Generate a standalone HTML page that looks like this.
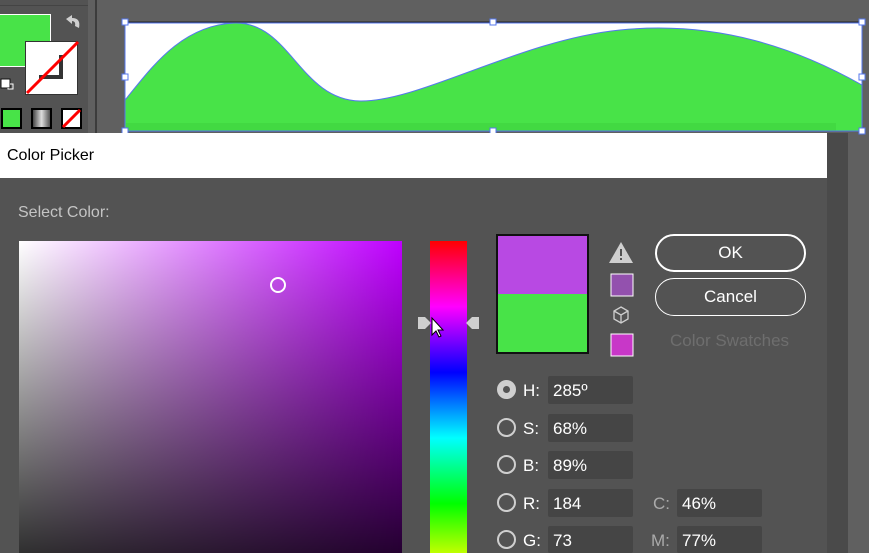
<!DOCTYPE html>
<html><head><style>
*{margin:0;padding:0;box-sizing:border-box}
html,body{width:869px;height:553px;overflow:hidden}
body{background:#606060;position:relative;font-family:"Liberation Sans",sans-serif}
.a{position:absolute}
.lbl{color:#fff;font-size:17px}
.fld{background:#454545;border-radius:2px;height:28px;width:85px;color:#fff;font-size:17px;padding:5px 0 0 5px;overflow:hidden}
.radio{width:19px;height:19px;border:2px solid #cfcfcf;border-radius:50%}
</style></head><body>
<div class="a" style="left:0;top:0;width:88px;height:135px;background:#535353"></div>
<div class="a" style="left:0;top:5px;width:88px;height:1px;background:#444"></div>
<div class="a" style="left:95px;top:0;width:2px;height:135px;background:#3c3c3c"></div>
<div class="a" style="left:0;top:14px;width:51px;height:53px;background:#48e348;border:1px solid #fff;border-left:none"></div>
<div class="a" style="left:25px;top:41px;width:53px;height:54px;background:#fff;border:1px solid #333"></div>
<div class="a" style="left:39px;top:55px;width:24px;height:24px;border:4px solid #333;border-top:none;border-left:none"></div>
<svg class="a" style="left:0;top:0" width="100" height="135">
<line x1="27" y1="93" x2="78" y2="42" stroke="#f00" stroke-width="3"/>
<path d="M66 19 l6 -4 v3 q9 0 7 10 l-4 -2 q1 -5 -3 -5 v3z" fill="#cfcfcf"/>
<rect x="1" y="79" width="9" height="9" fill="#fff" stroke="#111"/>
<path d="M10 84 h3 v5 h-5 v-1" fill="none" stroke="#fff" stroke-width="1"/>
<rect x="2" y="109" width="19" height="19" fill="#48e348" stroke="#000" stroke-width="2"/>
<defs><linearGradient id="g1"><stop offset="0" stop-color="#333"/><stop offset=".5" stop-color="#ddd"/><stop offset="1" stop-color="#444"/></linearGradient></defs>
<rect x="32" y="109" width="19" height="19" fill="url(#g1)" stroke="#000" stroke-width="2"/>
<rect x="62" y="109" width="19" height="19" fill="#fff" stroke="#000" stroke-width="2"/>
<line x1="63" y1="127" x2="80" y2="110" stroke="#f00" stroke-width="3"/>
</svg>
<svg class="a" style="left:0;top:0" width="869" height="140">
<rect x="125" y="23" width="737" height="108" fill="#fff"/>
<line x1="125" y1="22" x2="862" y2="22" stroke="#222"/>
<path d="M125 100 C150 70 180 25 235 23 C290 22 300 100 360 101 C420 102 520 40 620 30 C720 20 800 50 862 85 V131 H125Z" fill="#48e348" stroke="#5577ee" stroke-width="1"/>
<rect x="126" y="123" width="710" height="8" fill="#42d942"/>
<rect x="125" y="23" width="737" height="108" fill="none" stroke="#5577ee"/>
<g fill="#fff" stroke="#5577ee">
<rect x="122" y="19" width="6" height="6"/><rect x="490" y="19" width="6" height="6"/><rect x="859" y="19" width="6" height="6"/>
<rect x="122" y="74" width="6" height="6"/><rect x="859" y="74" width="6" height="6"/>
<rect x="122" y="128" width="6" height="6"/><rect x="490" y="128" width="6" height="6"/><rect x="859" y="128" width="6" height="6"/>
</g>
</svg>
<div class="a" style="left:827px;top:133px;width:21px;height:420px;background:#4a4a4a"></div>
<div class="a" style="left:0;top:133px;width:827px;height:45px;background:#fff"></div>
<div class="a" style="left:7px;top:147px;font-size:16px;color:#000">Color Picker</div>
<div class="a" style="left:0;top:178px;width:827px;height:375px;background:#535353"></div>
<div class="a" style="left:18px;top:204px;font-size:16px;color:#c4c4c4">Select Color:</div>
<div class="a" style="left:19px;top:241px;width:383px;height:312px;overflow:hidden">
<div style="width:383px;height:384px;background:linear-gradient(to bottom,rgba(0,0,0,0),#000),linear-gradient(to right,#fff,#bf00ff)"></div>
</div>
<div class="a" style="left:270px;top:277px;width:16px;height:16px;border:2px solid #fff;border-radius:50%"></div>
<div class="a" style="left:430px;top:241px;width:37px;height:312px;overflow:hidden">
<div style="width:37px;height:394px;background:linear-gradient(to bottom,#f00 0%,#f0f 16.67%,#00f 33.33%,#0ff 50%,#0f0 66.67%,#ff0 83.33%,#f00 100%)"></div>
</div>
<svg class="a" style="left:416px;top:315px" width="66" height="30">
<path d="M2 2 h7 l6 6 l-6 6 h-7z" fill="#cfcfcf"/><path d="M63 2 h-7 l-6 6 l6 6 h7z" fill="#cfcfcf"/>
<path d="M16 3 v17 l4 -4 l3 6 l2 -1 l-3 -6 h5z" fill="#fff" stroke="#000"/>
</svg>
<div class="a" style="left:496px;top:234px;width:93px;height:120px;border:2px solid #111;background:linear-gradient(#b849e3 50%,#48e348 50%)"></div>
<svg class="a" style="left:608px;top:240px" width="30" height="120">
<path d="M13 2 L25 23 H1Z" fill="#cfcfcf"/><rect x="12" y="9" width="2" height="7" fill="#535353"/><rect x="12" y="18" width="2" height="2" fill="#535353"/>
<rect x="3" y="34" width="22" height="22" fill="#9351ae" stroke="#fff"/>
<path d="M13 67 l7 4 v8 l-7 4 l-7 -4 v-8z M6 71 l7 4 l7 -4 M13 75 v8" fill="none" stroke="#cfcfcf" stroke-width="1.3"/>
<rect x="3" y="94" width="22" height="22" fill="#c837c8" stroke="#fff"/>
</svg>
<div class="a" style="left:655px;top:234px;width:151px;height:38px;border:2px solid #fff;border-radius:19px;color:#fff;font-size:17px;text-align:center;line-height:34px">OK</div>
<div class="a" style="left:655px;top:278px;width:151px;height:38px;border:1px solid #fff;border-radius:19px;color:#fff;font-size:17px;text-align:center;line-height:36px">Cancel</div>
<div class="a" style="left:670px;top:331px;font-size:17px;color:#6e6e6e">Color Swatches</div>
<div class="a radio" style="left:497px;top:380px;border-color:#cfcfcf;background:#cfcfcf"><div style="width:7px;height:7px;background:#535353;border-radius:50%;margin:4px"></div></div>
<div class="a lbl" style="left:523px;top:381px">H:</div><div class="a fld" style="left:548px;top:376px">285º</div>
<div class="a radio" style="left:497px;top:418px"></div>
<div class="a lbl" style="left:523px;top:419px">S:</div><div class="a fld" style="left:548px;top:414px">68%</div>
<div class="a radio" style="left:497px;top:455px"></div>
<div class="a lbl" style="left:523px;top:456px">B:</div><div class="a fld" style="left:548px;top:451px">89%</div>
<div class="a radio" style="left:497px;top:493px"></div>
<div class="a lbl" style="left:523px;top:494px">R:</div><div class="a fld" style="left:548px;top:489px">184</div>
<div class="a radio" style="left:497px;top:530px"></div>
<div class="a lbl" style="left:523px;top:531px">G:</div><div class="a fld" style="left:548px;top:526px;height:27px">73</div>
<div class="a lbl" style="left:653px;top:494px;color:#aaa">C:</div><div class="a fld" style="left:677px;top:489px">46%</div>
<div class="a lbl" style="left:651px;top:531px;color:#aaa">M:</div><div class="a fld" style="left:677px;top:526px;height:27px">77%</div>
</body></html>
